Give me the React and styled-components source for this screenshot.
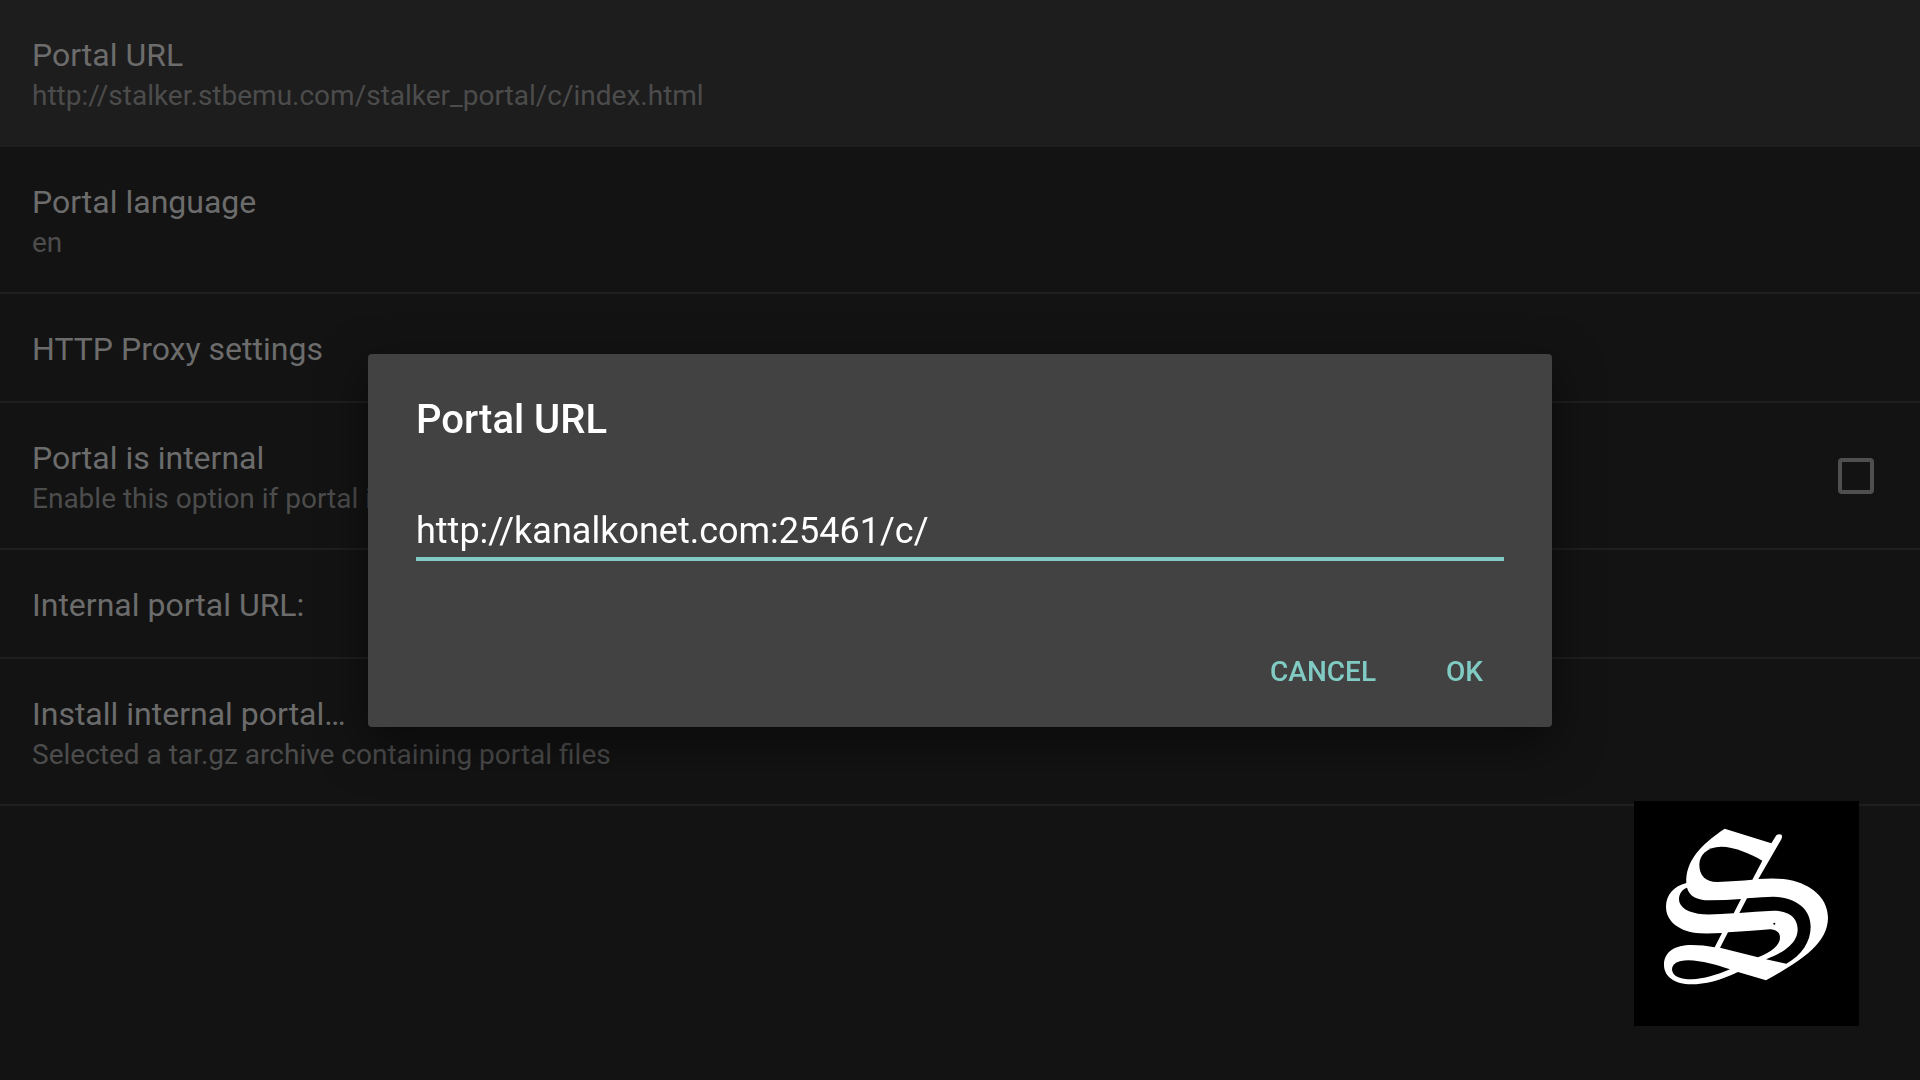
import { useState } from 'react';
import styled, { createGlobalStyle } from 'styled-components';

const GlobalStyle = createGlobalStyle`
  :root {
    --page: #131313;
    --pageFocused: #1d1d1d;
    --divider: #1f1f1f;
    --rowTitle: #6c6c6c;
    --rowSummary: #4c4c4c;
    --dialog: #424242;
    --accent: #80cbc4;
    --white: #ffffff;
  }

  *,
  *::before,
  *::after {
    box-sizing: border-box;
  }

  body {
    margin: 0;
    background-color: var(--page);
    font-family: Roboto, sans-serif;
  }

  button,
  input {
    font-family: inherit;
  }
`;

const PreferenceList = styled.ul`
  margin: 0;
  padding: 0;
  list-style: none;
`;

const PreferenceRow = styled.li`
  display: flex;
  align-items: center;
  justify-content: space-between;
  padding: 0 46px 0 32px;
  border-bottom: 2px solid var(--divider);
  background-color: ${({ $focused }) =>
    $focused ? 'var(--pageFocused)' : 'transparent'};
`;

const PreferenceText = styled.label`
  display: flex;
  flex-direction: column;
  gap: 5px;
  padding: 36px 0 33px;
`;

const PreferenceTitle = styled.span`
  color: var(--rowTitle);
  font-size: 32px;
  line-height: 38px;
`;

const PreferenceSummary = styled.span`
  color: var(--rowSummary);
  font-size: 28px;
  line-height: 33px;
`;

const Checkbox = styled.input`
  appearance: none;
  width: 36px;
  height: 36px;
  margin: 0;
  border: 4px solid #4f4f4f;
  border-radius: 4px;

  &:checked {
    background-color: var(--accent);
  }
`;

const Overlay = styled.div`
  position: fixed;
  inset: 0;
  display: grid;
  place-items: center;
  padding: 48px;
`;

const Dialog = styled.form`
  width: 100%;
  max-width: 1184px;
  padding: 42px 48px 19px;
  border-radius: 4px;
  background-color: var(--dialog);
  box-shadow: 0 16px 48px rgba(0, 0, 0, 0.5);
`;

const DialogTitle = styled.h1`
  margin: 0;
  color: var(--white);
  font-size: 40px;
  font-weight: 500;
  line-height: 48px;
`;

const UrlInput = styled.input`
  display: block;
  width: 100%;
  height: 60px;
  margin-top: 57px;
  padding: 4px 0 0;
  border: 0;
  border-bottom: 4px solid var(--accent);
  outline: 0;
  background: none;
  color: var(--white);
  font-size: 36px;
`;

const DialogActions = styled.div`
  display: flex;
  justify-content: flex-end;
  gap: 28px;
  margin-top: 75px;
`;

const DialogButton = styled.button`
  padding: 0 21px;
  border: 0;
  background: none;
  color: var(--accent);
  font-size: 28px;
  font-weight: 500;
  line-height: 72px;
  text-transform: uppercase;
`;

const Watermark = styled.div`
  position: fixed;
  right: 61px;
  bottom: 54px;
  width: 225px;
  height: 225px;
  background-color: #000000;

  svg {
    display: block;
  }
`;

const preferences = [
  {
    id: 'portal-url',
    title: 'Portal URL',
    summary: 'http://stalker.stbemu.com/stalker_portal/c/index.html',
    focused: true,
  },
  { id: 'portal-language', title: 'Portal language', summary: 'en' },
  { id: 'http-proxy', title: 'HTTP Proxy settings' },
  {
    id: 'portal-internal',
    title: 'Portal is internal',
    summary: 'Enable this option if portal is internal',
    checkbox: true,
  },
  { id: 'internal-url', title: 'Internal portal URL:' },
  {
    id: 'install-portal',
    title: 'Install internal portal…',
    summary: 'Selected a tar.gz archive containing portal files',
  },
];

function Preference({ id, title, summary, focused, checkbox }) {
  return (
    <PreferenceRow $focused={focused}>
      <PreferenceText
        as={checkbox ? 'label' : 'div'}
        htmlFor={checkbox ? id : undefined}
      >
        <PreferenceTitle>{title}</PreferenceTitle>
        {summary && <PreferenceSummary>{summary}</PreferenceSummary>}
      </PreferenceText>
      {checkbox && <Checkbox type='checkbox' id={id} />}
    </PreferenceRow>
  );
}

function Logo() {
  return (
    <svg width='225' height='225' viewBox='42 33 675 675' aria-hidden='true'>
      <g fill='#ffffff'>
        <path d='M314 116 L454 160 L469 136 Q476 130 485 134 Q488 141 484 148 L415 267 Q480 262 520 272 C585 290 624 330 624 385 C622 455 560 505 438 571 L354 546 C300 572 255 583 214 583 C165 583 132 560 132 525 C132 485 165 465 215 465 Q250 465 284 472 L306 429 Q270 431 240 430 C180 426 138 395 138 350 C138 315 162 288 199 279 C196 215 240 165 314 116 Z' />
      </g>
      <g fill='#000000'>
        <path d='M427 212 C385 188 345 171 303 170 C262 171 238 194 238 224 C238 255 255 275 292 276 Q350 273 397 269 Z' />
        <path d='M201 293 C208 318 230 331 268 331 Q320 331 363 327 L341 370 Q290 374 250 373 C205 370 177 352 177 328 C177 312 186 298 201 293 Z' />
        <path d='M381 325 Q430 320 460 320 C530 322 572 358 572 410 C572 455 545 495 499 521 L438 508 C500 485 533 455 533 418 C533 382 505 362 460 362 Q405 365 358 369 Z' />
        <path d='M324 427 Q400 422 450 418 C470 419 480 428 480 443 C480 465 455 485 414 502 L300 473 Z' />
        <path d='M330 538 C290 525 245 512 205 511 C172 511 156 522 156 539 C158 559 180 568 215 568 C250 567 290 555 330 538 Z' />
        <circle cx='463' cy='401' r='3' />
      </g>
    </svg>
  );
}

export default function App() {
  const [url, setUrl] = useState('http://kanalkonet.com:25461/c/');

  return (
    <>
      <GlobalStyle />
      <PreferenceList>
        {preferences.map((preference) => (
          <Preference key={preference.id} {...preference} />
        ))}
      </PreferenceList>
      <Overlay>
        <Dialog
          role='dialog'
          aria-labelledby='dialog-title'
          onSubmit={(e) => e.preventDefault()}
        >
          <DialogTitle id='dialog-title'>Portal URL</DialogTitle>
          <UrlInput
            type='text'
            aria-labelledby='dialog-title'
            spellCheck={false}
            value={url}
            onChange={(e) => setUrl(e.target.value)}
          />
          <DialogActions>
            <DialogButton type='button'>Cancel</DialogButton>
            <DialogButton type='submit'>OK</DialogButton>
          </DialogActions>
        </Dialog>
      </Overlay>
      <Watermark>
        <Logo />
      </Watermark>
    </>
  );
}
